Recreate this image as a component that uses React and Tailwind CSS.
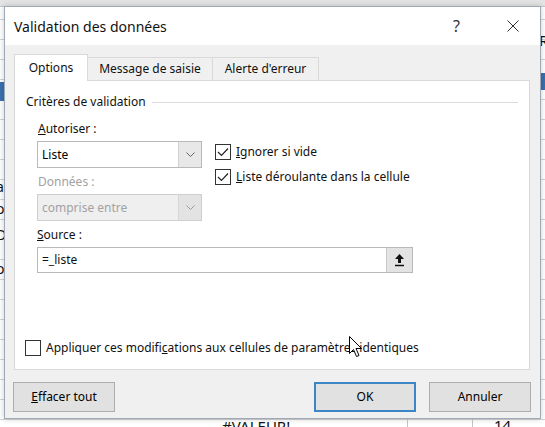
import { useState } from "react";

function Check({ checked }) {
  return (
    <span className="w-[16px] h-[16px] border border-[#333] bg-white flex items-center justify-center shrink-0">
      {checked && (
        <svg width="12" height="10" viewBox="0 0 12 10">
          <path d="M1 5 L4.5 8.5 L11 1.5" fill="none" stroke="#222" strokeWidth="1.2" />
        </svg>
      )}
    </span>
  );
}

function Chevron({ color }) {
  return (
    <svg width="9" height="5" viewBox="0 0 9 5">
      <path d="M0.5 0.5 L4.5 4.5 L8.5 0.5" fill="none" stroke={color} strokeWidth="1" />
    </svg>
  );
}

function Select({ value, disabled }) {
  return (
    <div
      className={
        "flex h-[27px] w-[165px] border " +
        (disabled ? "border-[#cfcfcf] bg-[#efefef] text-[#a2a2a2]" : "border-[#b9b9b9] bg-white text-black")
      }
    >
      <span className="flex-1 pl-[4px] flex items-center">{value}</span>
      <span
        className={
          "w-[23px] flex items-center justify-center border-l " +
          (disabled ? "border-[#d6d6d6] bg-[#e3e3e3]" : "border-[#d0d0d0] bg-[#e8e8e8]")
        }
      >
        <Chevron color={disabled ? "#9a9a9a" : "#666"} />
      </span>
    </div>
  );
}

function Button({ children, primary }) {
  return (
    <button
      className={
        "h-[30px] w-[102px] bg-[#e1e1e1] text-black " +
        (primary ? "border-2 border-[#3d86c6]" : "border border-[#adadad]")
      }
    >
      {children}
    </button>
  );
}

export default function App() {
  const [ignore, setIgnore] = useState(true);
  const [dropdown, setDropdown] = useState(true);
  const [apply, setApply] = useState(false);

  return (
    <div className="relative w-[545px] h-[427px] overflow-hidden bg-white font-['Noto_Sans',sans-serif] text-[12px] text-[#111]">
      {/* feuille Excel derrière */}
      <div className="absolute inset-0 bg-[repeating-linear-gradient(to_bottom,#ffffff_0px,#ffffff_19px,#d4d4d4_19px,#d4d4d4_20px)]" />
      <div className="absolute left-0 right-0 top-0 h-[7px] bg-[#e4e4e4] border-b border-[#c6c6c6]" />
      <div className="absolute left-0 top-[82px] w-[6px] h-[19px] bg-[#3a6fb0]" />
      <div className="absolute right-0 top-[73px] w-[8px] h-[17px] bg-[#3a6fb0]" />
      <div className="absolute left-[-4px] top-[180px] text-[14px] leading-none">a</div>
      <div className="absolute left-[-4px] top-[202px] text-[14px] leading-none">o</div>
      <div className="absolute left-[-4px] top-[228px] text-[14px] leading-none">D</div>
      <div className="absolute left-[-4px] top-[262px] text-[14px] leading-none">o</div>
      <div className="absolute right-[-3px] top-[34px] text-[14px] leading-none">R</div>
      <div className="absolute left-[222px] top-[419px] text-[15px] leading-none">#VALEUR!</div>
      <div className="absolute left-[407px] top-[419px] h-[8px] border-l border-[#c6c6c6]" />
      <div className="absolute left-[472px] top-[419px] h-[8px] border-l border-[#c6c6c6]" />
      <div className="absolute left-[494px] top-[418px] text-[15px] leading-none">14</div>

      {/* boîte de dialogue */}
      <div className="absolute left-[4px] top-[6px] w-[537px] h-[413px] flex flex-col border border-[#9fa9b5] bg-[#f0f0f0] shadow-[0_0_6px_rgba(0,0,0,0.2)]">
        <div className="h-[38px] bg-white flex items-center pl-[9px] shrink-0">
          <span className="flex-1 text-[14px]">Validation des données</span>
          <span className="text-[16px] text-[#333] w-[12px] mr-[42px]">?</span>
          <span className="w-[12px] mr-[21px] flex items-center">
            <svg width="12" height="12" viewBox="0 0 12 12">
              <path d="M0.5 0.5 L11.5 11.5 M11.5 0.5 L0.5 11.5" stroke="#333" strokeWidth="1" />
            </svg>
          </span>
        </div>

        <div className="flex-1 flex flex-col pl-[9px] pr-[10px] pt-[9px]">
          <div className="flex items-end h-[27px] -mb-px relative">
            <div className="h-[27px] w-[74px] bg-white border border-b-0 border-[#d9d9d9] flex items-center justify-center relative z-10">
              Options
            </div>
            <div className="h-[24px] w-[125px] bg-[#f0f0f0] border border-l-0 border-[#d9d9d9] flex items-center justify-center">
              Message de saisie
            </div>
            <div className="h-[24px] w-[106px] bg-[#f0f0f0] border border-l-0 border-[#d9d9d9] flex items-center justify-center">
              Alerte d'erreur
            </div>
          </div>

          <div className="h-[290px] bg-white border border-[#d9d9d9] flex flex-col">
            <div className="mt-[13px] ml-[11px] mr-[11px] h-[16px] flex items-center">
              <span>Critères de validation</span>
              <span className="flex-1 ml-[6px] border-t border-[#dcdcdc]" />
            </div>

            <div className="flex pl-[22px]">
              <div className="w-[165px] flex flex-col">
                <span className="mt-[11px] h-[16px] leading-[16px] pl-[1px]">
                  <u>A</u>utoriser :
                </span>
                <div className="mt-[4px]">
                  <Select value="Liste" />
                </div>
                <span className="mt-[6px] h-[16px] leading-[16px] pl-[1px] text-[#a2a2a2]">Données :</span>
                <div className="mt-[4px]">
                  <Select value="comprise entre" disabled />
                </div>
              </div>
              <div className="ml-[13px] pt-[34px] flex flex-col gap-[9px]">
                <label className="flex items-center gap-[5px] h-[16px]" onClick={() => setIgnore(!ignore)}>
                  <Check checked={ignore} />
                  <span>
                    <u>I</u>gnorer si vide
                  </span>
                </label>
                <label className="flex items-center gap-[5px] h-[16px]" onClick={() => setDropdown(!dropdown)}>
                  <Check checked={dropdown} />
                  <span>
                    <u>L</u>iste déroulante dans la cellule
                  </span>
                </label>
              </div>
            </div>

            <div className="pl-[22px] flex flex-col">
              <span className="mt-[6px] h-[16px] leading-[16px]">
                <u>S</u>ource :
              </span>
              <div className="mt-[4px] w-[376px] h-[26px] border border-[#b9b9b9] flex">
                <span className="flex-1 pl-[4px] flex items-center">=_liste</span>
                <span className="w-[26px] bg-[#e3e3e3] border-l border-[#c9c9c9] flex items-center justify-center">
                  <svg width="11" height="14" viewBox="0 0 11 14">
                    <path d="M5.5 1 L10 6 L7 6 L7 10 L4 10 L4 6 L1 6 Z" fill="#111" />
                    <path d="M1 12.5 L10 12.5" stroke="#111" strokeWidth="1.5" />
                  </svg>
                </span>
              </div>
            </div>

            <label className="mt-auto mb-[13px] ml-[10px] flex items-center gap-[5px] h-[16px]" onClick={() => setApply(!apply)}>
              <Check checked={apply} />
              <span>
                Appliquer ces modifi<u>c</u>ations aux cellules de paramètres identiques
              </span>
            </label>
          </div>

          <div className="mt-[12px] flex items-start">
            <div className="-ml-[1px]">
              <Button>
                <u>E</u>ffacer tout
              </Button>
            </div>
            <div className="ml-auto flex gap-[13px] -mr-[1px]">
              <Button primary>OK</Button>
              <Button>Annuler</Button>
            </div>
          </div>
        </div>
      </div>

      {/* pointeur de la souris */}
      <svg className="absolute left-[349px] top-[336px]" width="14" height="23" viewBox="0 0 14 23">
        <path d="M0.5 0.5 L0.5 17.5 L4.5 13.5 L7.5 20.5 L10 19.5 L7 12.5 L12.5 12.5 Z" fill="#fff" stroke="#000" strokeWidth="1" />
      </svg>
    </div>
  );
}
